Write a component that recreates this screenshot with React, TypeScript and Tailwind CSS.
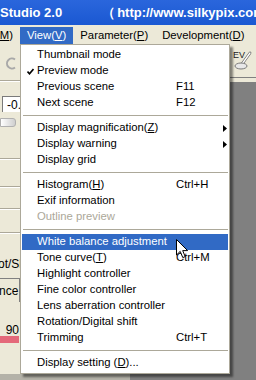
import React from "react";

const U = ({ c }: { c: string }) => <span className="underline underline-offset-[1px]">{c}</span>;

function Check() {
  return (
    <svg width="7" height="7" viewBox="0 0 7 7">
      <path d="M0.5 3.5 L2.5 5.8 L6.5 1" stroke="currentColor" strokeWidth="1.6" fill="none" />
    </svg>
  );
}

function Arrow() {
  return (
    <svg width="4" height="7" viewBox="0 0 4 7" className="ml-auto mr-[1px]">
      <polygon points="0,0 4,3.5 0,7" fill="currentColor" />
    </svg>
  );
}

type ItemProps = {
  label: React.ReactNode;
  shortcut?: string;
  arrow?: boolean;
  checked?: boolean;
  disabled?: boolean;
  active?: boolean;
};

function Item({ label, shortcut, arrow, checked, disabled, active }: ItemProps) {
  const color = active ? "bg-[#316ac5] text-white" : disabled ? "text-[#aca899]" : "text-black";
  return (
    <div className={`flex h-[16px] items-center ${color}`}>
      <div className="flex w-[15px] justify-center pl-[2px]">{checked && <Check />}</div>
      <div className="w-[139px] whitespace-nowrap">{label}</div>
      {shortcut && <div className="whitespace-nowrap">{shortcut}</div>}
      {arrow && <Arrow />}
    </div>
  );
}

function Sep() {
  return (
    <div className="flex h-[9px] items-center pl-[1px] pr-0">
      <div className="h-px w-full bg-[#aca899]" />
    </div>
  );
}

function Line() {
  return <div className="h-[2px] w-full border-t border-[#aca899] bg-white" />;
}

export default function App() {
  return (
    <div
      className="relative flex h-[380px] w-[256px] flex-col overflow-hidden bg-[#ece9d8] text-[11.3px] leading-none"
      style={{ fontFamily: '"Liberation Sans", Arial, sans-serif' }}
    >
      {/* Title bar */}
      <div className="flex h-[25px] shrink-0 items-center whitespace-pre bg-gradient-to-b from-[#2a66dc] to-[#1a58d2] text-[13px] font-bold text-white">
        <span>Studio 2.0</span>
        <span className="ml-[40px]">（</span>
        <span className="ml-[2px]">http://www.silkypix.com</span>
      </div>

      {/* Menu bar */}
      <div className="flex h-[19px] shrink-0 items-end bg-[#ece9d8] text-black">
        <div className="-ml-[4px] flex h-[17px] items-center pr-[7px]">
          (<U c="M" />)
        </div>
        <div className="flex h-[17px] items-center bg-[#316ac5] px-[7px] text-white">
          View(<U c="V" />)
        </div>
        <div className="flex h-[17px] items-center px-[7px]">
          Parameter(<U c="P" />)
        </div>
        <div className="flex h-[17px] items-center px-[7px]">
          Development(<U c="D" />)
        </div>
      </div>

      {/* Body */}
      <div className="flex flex-1">
        {/* Left column */}
        <div className="flex w-[130px] flex-col bg-[#ece9d8]">
          <div className="flex h-[36px] items-start pl-[5px] pt-[13px]">
            <svg width="12" height="13" viewBox="0 0 12 13">
              <path d="M10 2.5 A5 5 0 1 0 10 10.5" stroke="#a8a8a8" strokeWidth="2" fill="none" />
            </svg>
          </div>
          <Line />
          <div className="h-[14px]" />
          <div className="ml-[2px] flex h-[16px] w-[40px] items-center border-l border-t border-[#7a7a7a] bg-white pl-[4px] text-[12px]">
            -0.5
          </div>
          <div className="h-[6px]" />
          <div className="h-[9px] w-[16px] rounded-r-[3px] border border-[#b0b0b0] bg-gradient-to-r from-[#ffffff] to-[#cfcfcf]" />
          <div className="h-[31px]" />
          <Line />
          <div className="h-[26px]" />
          <Line />
          <div className="h-[20px]" />
          <Line />
          <div className="h-[22px]" />
          <Line />
          <div className="h-[24px]" />
          <div className="-ml-[2px] flex h-[12px] items-center whitespace-nowrap text-[12px]">ot/Sl</div>
          <div className="h-[8px]" />
          <div className="flex h-[24px] w-[20px] items-center overflow-hidden whitespace-nowrap border-r border-t border-[#808080] text-[12px]">
            <span className="-ml-[1px]">nce</span>
          </div>
          <div className="h-[23px]" />
          <div className="flex h-[10px] w-[19px] items-center justify-end text-[12px]">90</div>
          <div className="h-[1px]" />
          <div className="h-[7px] w-[19px] bg-[#e4697a]" />
          <div className="flex-1" />
          <div className="h-[6px] bg-[#b4b2a8]" />
        </div>

        {/* Right column */}
        <div className="flex flex-1 flex-col">
          <div className="flex h-[33px] items-start justify-end pr-[4px] pt-[6px]">
            <div className="relative h-[20px] w-[19px]">
              <span className="absolute left-0 top-[1px] text-[9px] leading-none text-[#222]">EV</span>
              <svg width="19" height="20" viewBox="0 0 19 20" className="absolute left-0 top-0">
                <path d="M17 3 L9 14" stroke="#6a6a6a" strokeWidth="2.8" strokeLinecap="round" />
                <path d="M17 3 L9 14" stroke="#ffffff" strokeWidth="1.3" strokeLinecap="round" />
                <ellipse cx="8" cy="16" rx="6" ry="3" fill="#e8e8e8" stroke="#7a7a7a" strokeWidth="1" />
              </svg>
            </div>
          </div>
          <div className="h-px bg-[#808080]" />
          <div className="h-[4px] bg-[#ece9d8]" />
          <div className="flex-1 bg-[#808080]" />
        </div>
      </div>

      {/* Dropdown menu */}
      <div className="absolute left-[20px] top-[44px] w-[210px] border border-[#aca899] bg-white p-[1px] pb-[2px] pt-[2px] shadow-[3px_3px_2px_rgba(0,0,0,0.45)]">
        <Item label="Thumbnail mode" />
        <Item label="Preview mode" checked />
        <Item label="Previous scene" shortcut="F11" />
        <Item label="Next scene" shortcut="F12" />
        <Sep />
        <Item label={<>Display magnification(<U c="Z" />)</>} arrow />
        <Item label="Display warning" arrow />
        <Item label="Display grid" />
        <Sep />
        <Item label={<>Histogram(<U c="H" />)</>} shortcut="Ctrl+H" />
        <Item label="Exif information" />
        <Item label="Outline preview" disabled />
        <Sep />
        <Item label="White balance adjustment" active />
        <Item label={<>Tone curve(<U c="T" />)</>} shortcut="Ctrl+M" />
        <Item label="Highlight controller" />
        <Item label="Fine color controller" />
        <Item label="Lens aberration controller" />
        <Item label="Rotation/Digital shift" />
        <Item label="Trimming" shortcut="Ctrl+T" />
        <Sep />
        <Item label={<>Display setting (<U c="D" />)...</>} />
      </div>

      {/* Mouse cursor */}
      <svg width="13" height="20" viewBox="0 0 13 20" className="absolute left-[176px] top-[239px]">
        <path d="M0.5 0.5 L0.5 16 L4.2 12.4 L6.8 18.6 L9.2 17.6 L6.7 11.6 L11.6 11.6 Z" fill="#ffffff" stroke="#000000" strokeWidth="1" />
      </svg>
    </div>
  );
}
